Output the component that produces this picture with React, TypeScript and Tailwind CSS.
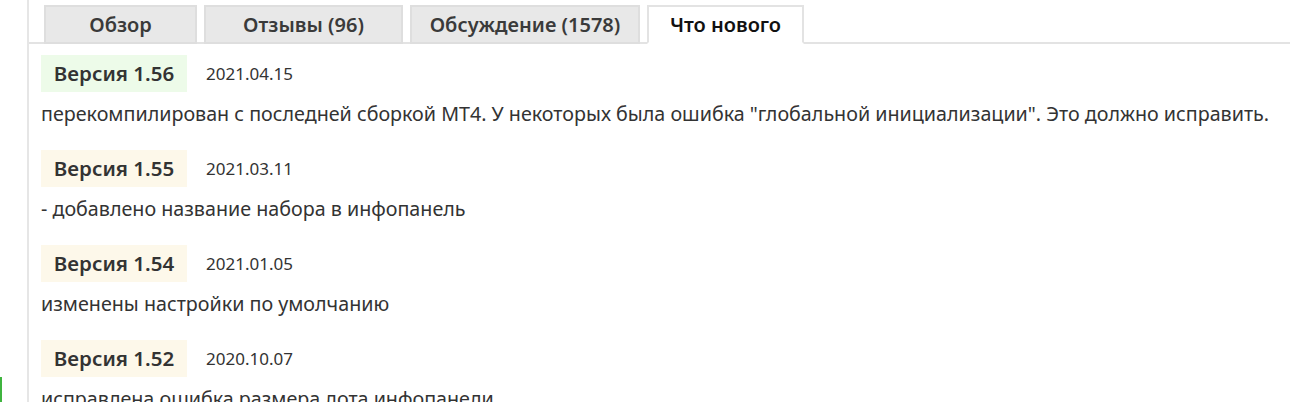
const tabs = [
  { label: 'Обзор', w: 'w-[153px]', active: false },
  { label: 'Отзывы (96)', w: 'w-[199px]', active: false },
  { label: 'Обсуждение (1578)', w: 'w-[230px]', active: false },
  { label: 'Что нового', w: 'w-[157px]', active: true },
];

const versions = [
  {
    v: '1.56',
    date: '2021.04.15',
    latest: true,
    note: 'перекомпилирован с последней сборкой МТ4. У некоторых была ошибка "глобальной инициализации". Это должно исправить.',
  },
  { v: '1.55', date: '2021.03.11', latest: false, note: '- добавлено название набора в инфопанель' },
  { v: '1.54', date: '2021.01.05', latest: false, note: 'изменены настройки по умолчанию' },
  { v: '1.52', date: '2020.10.07', latest: false, note: 'исправлена ошибка размера лота инфопанели' },
];

export default function App() {
  return (
    <div className="flex h-[402px] w-[1290px] overflow-hidden bg-white text-[#333] font-['Noto_Sans',sans-serif]">
      <div className="w-[27px] shrink-0">
        <div className="mt-[377px] h-[30px] w-[2px] bg-[#3fb43f]" />
      </div>
      <div className="flex-1 border-l-2 border-[#e6e6e6] pt-[5px]">
        <div className="flex items-end gap-[7px] border-b-2 border-[#e3e3e3] pl-[15px]">
          {tabs.map((t) => (
            <div
              key={t.label}
              className={`${t.w} -mb-[2px] flex h-[39px] items-center justify-center border-2 text-[20px] font-semibold ${
                t.active
                  ? 'border-[#e3e3e3] border-b-white bg-white text-[#111]'
                  : 'border-[#dedede] bg-[#e8e8e8] text-[#3a3a3a]'
              }`}
            >
              {t.label}
            </div>
          ))}
        </div>

        <div className="pl-[12px] pt-[11px]">
          {versions.map((item) => (
            <div key={item.v} className="mb-[23px]">
              <div className="flex items-center gap-[19px]">
                <span
                  className={`flex h-[37px] w-[146px] items-center justify-center text-[20.5px] font-semibold ${
                    item.latest ? 'bg-[#edfbe9]' : 'bg-[#fdf8ea]'
                  }`}
                >
                  Версия {item.v}
                </span>
                <span className="text-[17px]">{item.date}</span>
              </div>
              <p className="mt-[8px] text-[19.7px] leading-[27px]">{item.note}</p>
            </div>
          ))}
        </div>
      </div>
    </div>
  );
}
